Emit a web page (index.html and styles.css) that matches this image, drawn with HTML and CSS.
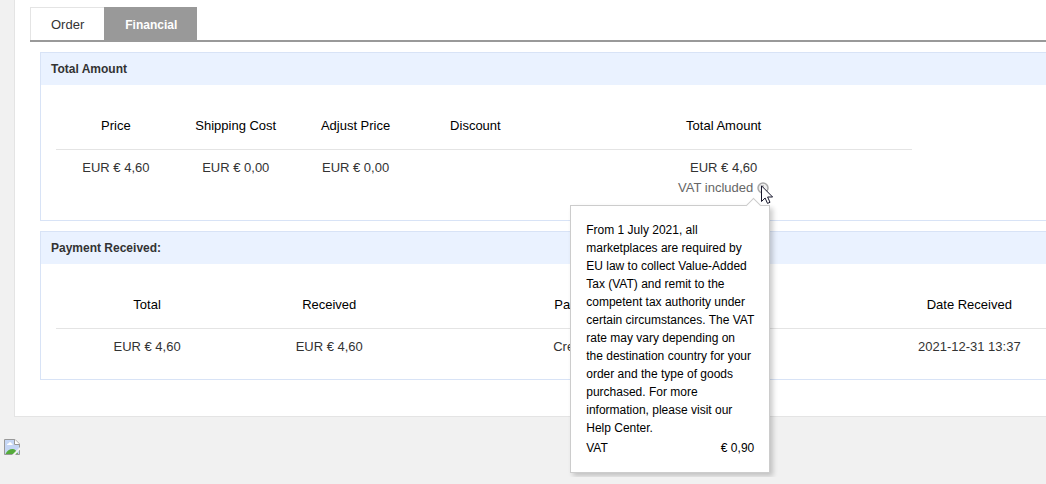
FILE: index.html
```html
<!DOCTYPE html>
<html lang="en">
<head>
<meta charset="utf-8">
<title>Order financial details</title>
<link rel="stylesheet" href="styles.css">
</head>
<body>
<main class="card">
  <nav class="tabs">
    <button class="tab" type="button">Order</button>
    <button class="tab tab-active" type="button">Financial</button>
  </nav>

  <section class="panel">
    <h2 class="panel-title">Total Amount</h2>
    <div class="panel-body">
      <table class="data amounts">
        <colgroup><col class="narrow"><col class="narrow"><col class="narrow"><col class="narrow"><col></colgroup>
        <thead>
          <tr><th>Price</th><th>Shipping Cost</th><th>Adjust Price</th><th>Discount</th><th>Total Amount</th></tr>
        </thead>
        <tbody>
          <tr>
            <td>EUR € 4,60</td>
            <td>EUR € 0,00</td>
            <td>EUR € 0,00</td>
            <td></td>
            <td>
              EUR € 4,60
              <div class="vat">
                <span>VAT included</span>
                <span class="hint">
                  <svg class="hint-icon" viewBox="0 0 12 12" aria-hidden="true"><circle cx="6" cy="6" r="5" fill="#eee" stroke="#aaa" stroke-width="1.500"/><path d="M6 3v4M6 8v1.200" stroke="#aaa" stroke-width="1.300"/></svg>
                  <svg class="cursor" viewBox="0 0 12 19" aria-hidden="true"><path d="M.5.800v15.700l3.600-3.500 2.400 5.400 2.500-1.100-2.400-5.300h5z" fill="#fff" stroke="#15152a"/></svg>
                  <div class="popover" role="tooltip">
                    <p class="popover-text">From 1 July 2021, all marketplaces are required by EU law to collect Value-Added Tax (VAT) and remit to the competent tax authority under certain circumstances. The VAT rate may vary depending on the destination country for your order and the type of goods purchased. For more information, please visit our Help Center.</p>
                    <div class="popover-row"><span>VAT</span><span>€ 0,90</span></div>
                  </div>
                </span>
              </div>
            </td>
          </tr>
        </tbody>
      </table>
    </div>
  </section>

  <section class="panel">
    <h2 class="panel-title">Payment Received:</h2>
    <div class="panel-body">
      <table class="data payments">
        <colgroup><col class="single"><col class="single"><col class="double"><col></colgroup>
        <thead>
          <tr><th>Total</th><th>Received</th><th>Payment Method</th><th>Date Received</th></tr>
        </thead>
        <tbody>
          <tr><td>EUR € 4,60</td><td>EUR € 4,60</td><td>Credit/Debit Card</td><td>2021-12-31 13:37</td></tr>
        </tbody>
      </table>
    </div>
  </section>
</main>
<footer class="footer">
  <svg class="missing" viewBox="0 0 16 16" role="img" aria-label="Image unavailable">
    <path d="M.5.500h10.500l4.500 4.500v10.500H.5z" fill="#fff" stroke="#999"/>
    <path d="M1 1h9v5h5v9H1z" fill="#c5d6f5"/>
    <path d="M3 6c0-1.500 1.200-1.500 1.500-1.500C5 2.500 7.500 3 7.500 4.500c1.500 0 1.500 1.500.5 1.500z" fill="#fff"/>
    <path d="M1.500 15c1.500-3.500 4-5 7-5 2.500 0 4.500 2 5.500 5z" fill="#55ab3a"/>
    <path d="M10.500 .500v5h5" fill="#fff" stroke="#999"/>
    <path d="M16 8v2.500L11 16H8z" fill="#f1f1f1"/>
  </svg>
</footer>
</body>
</html>
```
FILE: styles.css
```css
* { box-sizing: border-box; }

body {
  margin: 0;
  background: #f1f1f1;
  color: #333;
  font: 13px/20px "Liberation Sans", Arial, sans-serif;
}

.card {
  margin-left: 14px;
  padding: 7px 0 36px 15px;
  background: #fff;
  border-left: 1px solid #e4e4e4;
  border-bottom: 1px solid #e4e4e4;
}

.tabs {
  display: flex;
  border-bottom: 2px solid #999;
}

.tab {
  height: 33px;
  padding: 1px 20px 0;
  border: 1px solid #e4e4e4;
  border-width: 1px 0 0 1px;
  background: #fff;
  color: #333;
  font: 13px/20px "Liberation Sans", Arial, sans-serif;
}

.tab-active {
  border-color: #999;
  background: #999;
  color: #fff;
  font-weight: bold;
  font-size: 12px;
}

.panel {
  margin: 10px 0 0 10px;
  border: 1px solid #d8e3f6;
  border-right: 0;
}

.panel-title {
  margin: 0;
  padding: 6px 10px;
  background: #eaf2ff;
  font-size: 12px;
  font-weight: bold;
  line-height: 20px;
}

.panel-body { padding: 0 0 22px 15px; }

.data {
  width: 100%;
  table-layout: fixed;
  border-collapse: separate;
  border-spacing: 0;
  text-align: center;
}

.data th {
  height: 65px;
  padding: 17px 0 0;
  border-bottom: 1px solid #e4e4e4;
  color: #000;
  font-weight: normal;
}

.data td {
  padding: 8px 0 0;
  vertical-align: top;
}

.amounts { max-width: 856px; }
.narrow { width: 14%; }
.single { width: 18.4%; }
.double { width: 37%; }

.payments th:last-child,
.payments td:last-child { padding-left: 106px; }

.vat {
  display: flex;
  align-items: center;
  justify-content: center;
  gap: 4px;
  color: #666;
}

.hint {
  position: relative;
  width: 12px;
  height: 12px;
}

.hint-icon {
  display: block;
  width: 12px;
  height: 12px;
}

.cursor {
  position: absolute;
  top: 3px;
  left: 4px;
  z-index: 3;
  width: 12px;
  height: 19px;
  overflow: visible;
}

.popover {
  position: absolute;
  top: 23px;
  right: -1px;
  z-index: 2;
  width: 200px;
  padding: 15px;
  background: #fff;
  border: 1px solid #ccc;
  box-shadow: 3px 3px 5px rgba(0, 0, 0, .2);
  color: #000;
  font-size: 12px;
  line-height: 18px;
  text-align: left;
}

.popover::before {
  content: "";
  position: absolute;
  top: -6px;
  right: 10px;
  width: 10px;
  height: 10px;
  background: #fff;
  border: 1px solid #ccc;
  border-width: 1px 0 0 1px;
  transform: rotate(45deg);
}

.popover-text { margin: 0 0 2px; }

.popover-row {
  display: flex;
  justify-content: space-between;
}

.footer { padding: 22px 4px; }

.missing {
  display: block;
  width: 16px;
  height: 16px;
}
```
